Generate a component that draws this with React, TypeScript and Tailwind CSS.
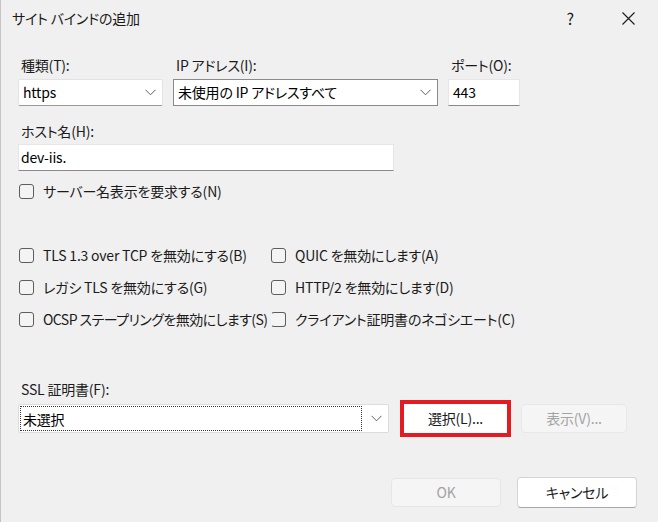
import React from "react";

const font = "[font-family:'Noto_Sans_CJK_JP','Noto_Sans',sans-serif] [font-feature-settings:'palt'] tracking-[-0.2px]";

function Chevron() {
    return (
        <svg width="11" height="7" viewBox="0 0 11 7" className="shrink-0">
            <polyline points="0.5,0.8 5.5,5.8 10.5,0.8" fill="none" stroke="#5f5f5f" strokeWidth="1" />
        </svg>
    );
}

function Checkbox({ label, cut = false, tight = false }: { label: string; cut?: boolean; tight?: boolean }) {
    return (
        <div className="flex items-center h-[20px]">
            <div
                className={`w-[15px] h-[15px] rounded-[3px] border border-[#5d5d5d] bg-[#f4f4f4] shrink-0 ${cut ? "border-l-transparent" : ""}`}
            />
            <span className={`ml-[9px] text-[14px] leading-[20px] text-[#1b1b1b] whitespace-nowrap ${tight ? "tracking-[-0.55px]" : ""}`}>{label}</span>
        </div>
    );
}

function Label({ children }: { children: React.ReactNode }) {
    return <div className="h-[20px] leading-[20px] text-[14px] text-[#1b1b1b] pl-[3px] whitespace-nowrap">{children}</div>;
}

export default function App() {
    return (
        <div className={`w-[658px] h-[522px] bg-[#f0f0f0] border-l border-[#c4c4c4] flex flex-col overflow-hidden ${font}`}>
            {/* Title bar */}
            <div className="h-[36px] flex items-center shrink-0">
                <span className="ml-[11px] text-[14px] leading-[20px] text-[#1a1a1a]">サイト バインドの追加</span>
                <div className="flex-1" />
                <span className="text-[16px] leading-[20px] text-[#1a1a1a] mr-[48px]">?</span>
                <svg width="13" height="13" viewBox="0 0 13 13" className="mr-[23px]">
                    <path d="M0.5 0.5 L12.5 12.5 M12.5 0.5 L0.5 12.5" stroke="#1a1a1a" strokeWidth="1.1" />
                </svg>
            </div>

            <div className="pl-[17px] flex flex-col">
                {/* Type / IP / Port */}
                <div className="flex mt-[19px]">
                    <div className="w-[145px] flex flex-col">
                        <Label>種類(T):</Label>
                        <div className="mt-[4px] h-[27px] bg-white border border-[#e3e3e3] border-b-[#9a9a9a] rounded-[2px] flex items-center px-[4px]">
                            <span className="text-[14px] flex-1">https</span>
                            <span className="mr-[2px]"><Chevron /></span>
                        </div>
                    </div>
                    <div className="w-[265px] ml-[10px] flex flex-col">
                        <Label>IP アドレス(I):</Label>
                        <div className="mt-[4px] h-[27px] bg-white border border-[#8a8a8a] flex items-center px-[4px]">
                            <span className="text-[14px] flex-1">未使用の IP アドレスすべて</span>
                            <span className="mr-[2px]"><Chevron /></span>
                        </div>
                    </div>
                    <div className="w-[72px] ml-[10px] flex flex-col">
                        <Label>ポート(O):</Label>
                        <div className="mt-[4px] h-[27px] bg-white border border-[#e6e6e6] border-b-[#8a8a8a] flex items-center px-[4px]">
                            <span className="text-[14px]">443</span>
                        </div>
                    </div>
                </div>

                {/* Host name */}
                <div className="mt-[15px] w-[376px] flex flex-col">
                    <Label>ホスト名(H):</Label>
                    <div className="mt-[3px] h-[27px] bg-white border border-[#e6e6e6] border-b-[#8a8a8a] flex items-center px-[2px]">
                        <span className="text-[14px]">dev-iis.</span>
                    </div>
                </div>

                <div className="mt-[10px] pl-[1px]">
                    <Checkbox label="サーバー名表示を要求する(N)" />
                </div>

                {/* Protocol options */}
                <div className="mt-[44px] pl-[1px] grid grid-cols-[252px_1fr] gap-y-[12px]">
                    <Checkbox label="TLS 1.3 over TCP を無効にする(B)" />
                    <Checkbox label="QUIC を無効にします(A)" />
                    <Checkbox label="レガシ TLS を無効にする(G)" />
                    <Checkbox label="HTTP/2 を無効にします(D)" />
                    <Checkbox label="OCSP ステープリングを無効にします(S)" tight />
                    <Checkbox label="クライアント証明書のネゴシエート(C)" cut />
                </div>

                {/* SSL certificate */}
                <div className="mt-[50px]">
                    <Label>SSL 証明書(F):</Label>
                </div>
                <div className="flex items-center mt-[1px]">
                    <div className="w-[371px] h-[29px] bg-white border border-[#dcdcdc] rounded-[2px] flex items-center pl-[1px] pr-[6px]">
                        <div className="flex-1 h-[25px] border border-dotted border-[#333] flex items-center pl-[2px]">
                            <span className="text-[14px] leading-[20px]">未選択</span>
                        </div>
                        <span className="ml-[9px]"><Chevron /></span>
                    </div>
                    <div className="ml-[11px] w-[111px] h-[37px] border-[4px] border-[#e41b23] bg-white flex items-center justify-center">
                        <span className="text-[14px] text-[#1b1b1b]">選択(L)...</span>
                    </div>
                    <div className="ml-[10px] w-[106px] h-[29px] bg-[#f5f5f5] border border-[#e8e8e8] rounded-[4px] flex items-center justify-center">
                        <span className="text-[14px] text-[#a3a3a3]">表示(V)...</span>
                    </div>
                </div>

                {/* Dialog buttons */}
                <div className="flex items-center justify-end mt-[40px] pr-[21px]">
                    <div className="w-[110px] h-[29px] bg-[#f5f5f5] border border-[#e6e6e6] rounded-[4px] flex items-center justify-center">
                        <span className="text-[14px] text-[#a3a3a3]">OK</span>
                    </div>
                    <div className="ml-[16px] w-[120px] h-[31px] bg-white border border-[#d4d4d4] border-b-[#a8a8a8] rounded-[4px] flex items-center justify-center">
                        <span className="text-[14px] text-[#1b1b1b]">キャンセル</span>
                    </div>
                </div>
            </div>
        </div>
    );
}
